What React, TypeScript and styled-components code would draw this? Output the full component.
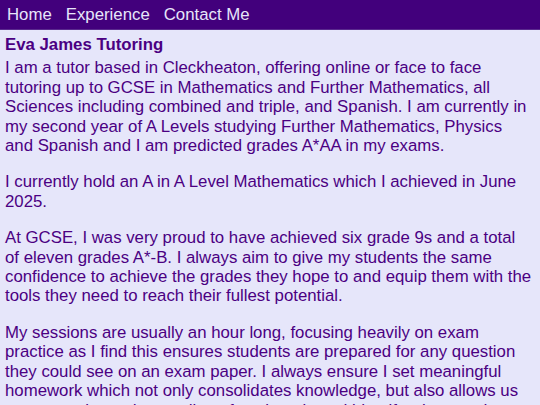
import React from "react";
import styled, { createGlobalStyle } from "styled-components";

const GlobalStyle = createGlobalStyle`
  html, body {
    margin: 0;
    padding: 0;
    background-color: #e6e6fa;
  }
  body {
    font-family: "Liberation Sans", Arial, sans-serif;
    color: #4b0082;
  }
`;

const NavBar = styled.nav`
  display: flex;
  align-items: center;
  height: 30px;
  background-color: #42007c;
  border-bottom: 1px solid #5a2a8e;
  box-sizing: border-box;
`;

const NavLink = styled.a`
  font-size: 16.8px;
  color: #e6e6fa;
  text-decoration: none;
  padding: 0 7px;
  line-height: 30px;
`;

const Main = styled.main`
  padding: 5px 7.5px 0 5px;
`;

const Title = styled.h1`
  font-size: 16.8px;
  font-weight: 700;
  margin: 0 0 4px;
  line-height: 19.4px;
`;

const Paragraph = styled.p`
  font-size: 16.8px;
  line-height: 19.4px;
  margin: 0 0 17px;
`;

export default function App() {
  return (
    <>
      <GlobalStyle />
      <NavBar>
        <NavLink href="#">Home</NavLink>
        <NavLink href="#">Experience</NavLink>
        <NavLink href="#">Contact Me</NavLink>
      </NavBar>
      <Main>
        <Title>Eva James Tutoring</Title>
        <Paragraph>
          I am a tutor based in Cleckheaton, offering online or face to face
          tutoring up to GCSE in Mathematics and Further Mathematics, all
          Sciences including combined and triple, and Spanish. I am currently in
          my second year of A Levels studying Further Mathematics, Physics and
          Spanish and I am predicted grades A*AA in my exams.
        </Paragraph>
        <Paragraph>
          I currently hold an A in A Level Mathematics which I achieved in June
          2025.
        </Paragraph>
        <Paragraph>
          At GCSE, I was very proud to have achieved six grade 9s and a total
          of eleven grades A*-B. I always aim to give my students the same
          confidence to achieve the grades they hope to and equip them with the
          tools they need to reach their fullest potential.
        </Paragraph>
        <Paragraph>
          My sessions are usually an hour long, focusing heavily on exam
          practice as I find this ensures students are prepared for any question
          they could see on an exam paper. I always ensure I set meaningful
          homework which not only consolidates knowledge, but also allows us
          to assess the understanding of each topic and identify what needs
          more work.
        </Paragraph>
      </Main>
    </>
  );
}
